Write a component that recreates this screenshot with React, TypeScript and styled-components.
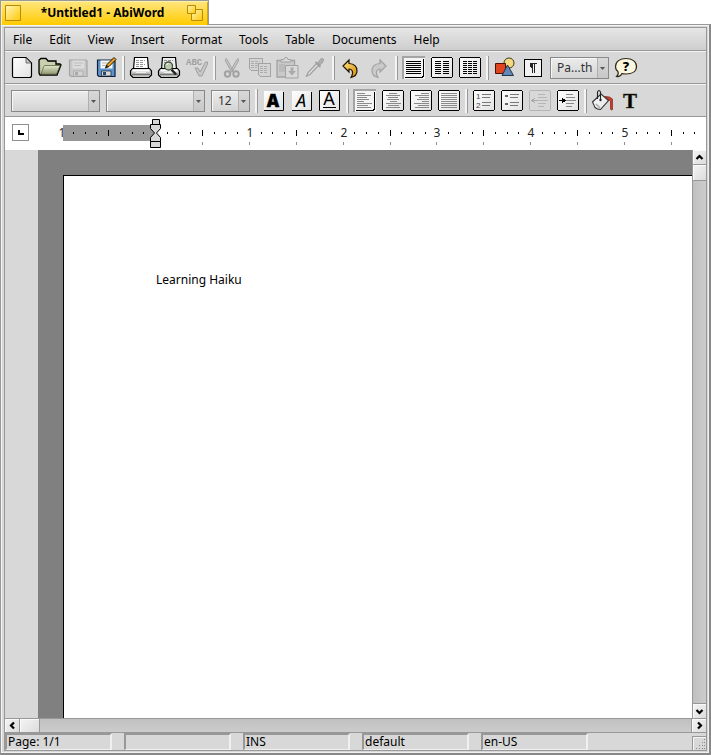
import React from "react";
import styled, { createGlobalStyle, css } from "styled-components";

const line = "#989898";
const face = "#d8d8d8";

const GlobalStyle = createGlobalStyle`
  *, *::before, *::after { box-sizing: border-box; }
  html, body { margin: 0; height: 100%; background: #fff; }
  #root { height: 100%; }
  body, button, select { font-family: "Noto Sans", "Open Sans", sans-serif; font-size: 12px; color: #000; }
  button { border: 0; padding: 0; margin: 0; background: none; }
`;

const Window = styled.div`
  display: flex;
  flex-direction: column;
  height: 100vh;
  min-height: 300px;
`;

const TitleTab = styled.header`
  display: flex;
  align-items: center;
  justify-content: space-between;
  align-self: flex-start;
  width: 209px;
  height: 25px;
  flex: none;
  padding: 0 5px 0 4px;
  margin-bottom: -1px;
  position: relative;
  border: 1px solid ${line};
  border-bottom: 0;
  background: linear-gradient(#ffe680, #ffcb00);
  box-shadow: inset 1px 1px #fff0a8, inset -1px 0 #d8a800;
`;

const Title = styled.h1`
  flex: 1;
  margin: 0;
  padding-right: 3px;
  text-align: center;
  font-size: 12px;
  line-height: 24px;
  font-weight: 700;
`;

const TitleButton = styled.button`
  display: flex;
`;

const Frame = styled.div`
  display: flex;
  flex-direction: column;
  flex: 1;
  min-height: 0;
  padding: 2px;
  border: 1px solid ${line};
  border-right: 2px solid #888;
  border-bottom: 2px solid #888;
  background: ${face};
  box-shadow: inset 1px 1px #f4f4f4, inset -1px -1px #f0f0f0;
`;

const Content = styled.div`
  display: flex;
  flex-direction: column;
  flex: 1;
  min-height: 0;
  border: 1px solid ${line};
  margin: 0 0 0 1px;
  background: ${face};
`;

const MenuBar = styled.nav`
  display: flex;
  flex: none;
  height: 23px;
  border-bottom: 1px solid ${line};
  background: linear-gradient(#e6e6e6, #cecece);
`;

const MenuItem = styled.button`
  padding: 1px 9px 0 8px;
  line-height: 22px;
`;

const Toolbar = styled.div`
  display: flex;
  align-items: center;
  flex: none;
  height: 33px;
  padding: 0 3px;
  border-top: 1px solid #f4f4f4;
  border-bottom: 1px solid ${line};
  background: ${face};
`;

const ToolButton = styled.button`
  display: flex;
  align-items: center;
  justify-content: center;
  flex: none;
  width: 28px;
  height: 28px;
  svg { display: block; overflow: visible; }
`;

const Separator = styled.span`
  flex: none;
  width: 3px;
  height: 24px;
  margin: 0 2px;
  background: linear-gradient(90deg, #f4f4f4 2px, #989898 2px);
`;

const Combo = styled.span<{ $width: number }>`
  display: flex;
  position: relative;
  flex: none;
  width: ${(p) => p.$width}px;
  height: 22px;
  margin: 0 3px;
  border: 1px solid #888;
  box-shadow: inset 1px 1px #f8f8f8;
  background: linear-gradient(#ececec, #d4d4d4);
  &::after {
    content: "";
    position: absolute;
    inset: 0 0 0 auto;
    width: 11px;
    pointer-events: none;
    border-left: 1px solid #b0b0b0;
    background: linear-gradient(#d8d8d8, #c8c8c8);
  }
`;

const ComboSelect = styled.select`
  appearance: none;
  flex: 1;
  min-width: 0;
  padding: 0 12px 0 6px;
  border: 0;
  border-radius: 0;
  outline: 0;
  background: none;
  color: #333;
  line-height: 20px;
`;

const ComboArrow = styled.svg`
  position: absolute;
  right: 3px;
  top: 9px;
  z-index: 1;
  pointer-events: none;
`;

const Ruler = styled.div`
  display: flex;
  flex: none;
  align-items: center;
  height: 33px;
  background: #fff;
`;

const TabSelector = styled.button`
  display: flex;
  align-items: center;
  justify-content: center;
  flex: none;
  width: 17px;
  height: 17px;
  margin: 0 0 2px 7px;
  border: 1px solid #909090;
  background: #fff;
`;

const RulerScale = styled.svg`
  display: block;
  flex: 1;
  min-width: 0;
  height: 33px;
  margin-left: 24px;
  overflow: hidden;
  font-family: "Noto Sans", sans-serif;
  font-size: 12px;
`;

const Workspace = styled.div`
  display: flex;
  flex: 1;
  min-height: 0;
`;

const LeftRuler = styled.div`
  flex: none;
  width: 33px;
  background: ${face};
`;

const Viewport = styled.main`
  flex: 1;
  min-width: 0;
  overflow: hidden;
  padding: 25px 0 0 25px;
  background: #808080;
`;

const Page = styled.article`
  height: 100%;
  padding: 95px 92px;
  border-top: 1px solid #000;
  border-left: 1px solid #000;
  background: #fff;
`;

const Paragraph = styled.p`
  margin: 0;
  font-size: 12px;
  line-height: 17px;
`;

const ScrollBar = styled.div<{ $vertical?: boolean }>`
  display: flex;
  flex: ${(p) => (p.$vertical ? "none" : "0 0 15px")};
  flex-direction: ${(p) => (p.$vertical ? "column" : "row")};
  ${(p) =>
    p.$vertical
      ? css`
          width: 14px;
          border-left: 1px solid ${line};
          background: linear-gradient(90deg, #c0c0c0, #cccccc);
        `
      : css`
          border-top: 1px solid ${line};
          border-bottom: 1px solid ${line};
          background: linear-gradient(#c0c0c0, #cccccc);
        `}
`;

const raised = css`
  background: linear-gradient(135deg, #f4f4f4, #dcdcdc);
  box-shadow: inset 1px 1px #fafafa;
`;

const ScrollButton = styled.button<{ $vertical?: boolean }>`
  display: flex;
  align-items: center;
  justify-content: center;
  flex: none;
  width: ${(p) => (p.$vertical ? 13 : 14)}px;
  height: ${(p) => (p.$vertical ? 14 : 13)}px;
  ${raised}
`;

const ScrollThumb = styled.div<{ $vertical?: boolean }>`
  flex: none;
  width: ${(p) => (p.$vertical ? 13 : 21)}px;
  height: ${(p) => (p.$vertical ? 17 : 13)}px;
  border: 0 solid ${line};
  border-width: ${(p) => (p.$vertical ? "1px 0" : "0 1px")};
  ${raised}
`;

const ScrollSpace = styled.div<{ $vertical?: boolean }>`
  flex: 1;
  ${(p) => (p.$vertical ? "border-bottom" : "border-right")}: 1px solid ${line};
`;

const StatusBar = styled.footer`
  display: flex;
  flex: none;
  gap: 12px;
  height: 17px;
  background: ${face};
`;

const StatusPanel = styled.div`
  flex: 0 1 107px;
  min-width: 0;
  height: 17px;
  padding-left: 1px;
  border: 2px solid;
  border-color: ${line} #f0f0f0 #f0f0f0 ${line};
  border-width: 2px 2px 1px 2px;
  line-height: 14px;
  white-space: nowrap;
`;

const ResizeGrip = styled.div`
  display: flex;
  align-items: flex-end;
  justify-content: flex-end;
  flex: none;
  width: 14px;
  height: 14px;
  margin: 3px 0 0 auto;
  border-top: 1px solid ${line};
  border-left: 1px solid ${line};
  box-shadow: inset 1px 1px #f4f4f4;
`;

const Ic = ({ children, crisp }: { children: React.ReactNode; crisp?: boolean }) => (
  <svg width="24" height="24" viewBox="0 0 24 24" fill="none" shapeRendering={crisp ? "crispEdges" : undefined} aria-hidden="true">
    <defs>
      <linearGradient id="paper" x1="0" y1="0" x2="1" y2="1">
        <stop offset="0" stopColor="#fff" />
        <stop offset="1" stopColor="#e2e2e2" />
      </linearGradient>
      <linearGradient id="olive" x1="0" y1="0" x2="0" y2="1">
        <stop offset="0" stopColor="#e3e8cb" />
        <stop offset="1" stopColor="#8c9670" />
      </linearGradient>
      <linearGradient id="gold" x1="0" y1="0" x2="1" y2="1">
        <stop offset="0" stopColor="#ffe68a" />
        <stop offset="1" stopColor="#d78b00" />
      </linearGradient>
    </defs>
    {children}
  </svg>
);

const NewIcon = () => (
  <Ic>
    <path d="M4 1.500H16L21.500 7V19.500Q21.500 21.500 19.500 21.500H4Q2.500 21.500 2.500 20V3Q2.500 1.500 4 1.500Z" fill="url(#paper)" stroke="#000" strokeWidth="1.200" />
    <path d="M16 2V7H21Z" fill="#c8c8c8" stroke="#555" strokeWidth=".8" />
  </Ic>
);

const OpenIcon = () => (
  <Ic>
    <path d="M1 17V4L3 2.500H8L10 5H18V8H22L23 9L19 19H2Z" fill="#aab28b" stroke="#000" strokeWidth="1.300" />
    <path d="M2 4.500L3.500 3.500H7.500L9.500 6H17V9H7L3 17Z" fill="#cbd1af" />
    <path d="M6.500 9.500H22L18.500 18.300H3L5.500 11Z" fill="url(#olive)" stroke="#505a38" strokeWidth=".7" />
  </Ic>
);

const Floppy = ({ off }: { off?: boolean }) => {
  const edge = off ? "#a4a4a4" : "#102038";
  return (
    <g>
      <path d="M3.500 4H20L21 5V20.500H5L3.500 19Z" fill={off ? "#c8c8c8" : "#5d92ca"} stroke={edge} strokeWidth="1.200" />
      <path d="M6.500 4.500H18.500V12.500H6.500Z" fill={off ? "#dcdcdc" : "#f8f8f8"} />
      <path d="M8 7H17M8 9.500H15" stroke={off ? "#bdbdbd" : "#b6b6b6"} />
      <path d="M7.500 15H17V20H7.500Z" fill={off ? "#d4d4d4" : "#d8d8d8"} stroke={edge} strokeWidth=".7" />
      <path d="M9 16H12V19H9Z" fill={off ? "#aaa" : "#28456b"} />
    </g>
  );
};

const SaveAsIcon = () => (
  <Ic>
    <Floppy />
    <path d="M11.500 12L13 8.500L20 1.500L22 3.500L15 10.500Z" fill="#f0a11d" stroke="#211400" strokeWidth="1" />
    <path d="M11 12.500L13 9L14.500 10.500Z" fill="#222" />
  </Ic>
);

const PrintIcon = ({ preview }: { preview?: boolean }) => (
  <Ic>
    <path d="M4.500 13L5.500 1.500H18.500L19.500 13" fill={preview ? "#ececec" : "#fff"} stroke="#000" strokeWidth="1.200" />
    <path d="M7 4.500H16M7 6.500H14M7 8.500H16M7 10.500H14" stroke="#888" strokeDasharray="3 1" strokeWidth=".9" />
    <path d="M3.500 12.500H20.500L22.500 15V19L20 21.500H4L1.500 19V15Z" fill="#c4c7c2" stroke="#000" strokeWidth="1.200" />
    <path d="M3.500 14.500H20.500" stroke="#fff" strokeWidth="2" />
    <path d="M3 18.500H21" stroke="#777" strokeWidth="1.500" />
    <path d="M7 16.500H17" stroke="#eee" />
    {preview && (
      <g>
        <path d="M14.500 13.500L19 18.500" stroke="#222" strokeWidth="2.500" />
        <circle cx="11.500" cy="10" r="4" fill="#bccab0" stroke="#465040" strokeWidth="1.300" />
        <path d="M9.500 9Q10 7.500 11.500 7.500" stroke="#fff" />
      </g>
    )}
  </Ic>
);

const SpellIcon = () => (
  <Ic>
    <text x="1" y="9" fontFamily="Liberation Mono, monospace" fontWeight="700" fontSize="9" fill="#a0a0a0">ABC</text>
    <path d="M10 12L13 12L15 16L20.500 6H22.500V8L17 20H14Z" fill="#c6c6c6" stroke="#a0a0a0" strokeWidth="1" />
  </Ic>
);

const CutIcon = () => (
  <Ic>
    <path d="M6 2.500L8 5L13 15L11.500 16L5.500 5ZM18 2.500L16 5L10.500 15L12 16L18.500 5Z" fill="#c8c8c8" stroke="#a2a2a2" />
    <circle cx="7.500" cy="18" r="2.700" stroke="#a2a2a2" strokeWidth="2" />
    <circle cx="16" cy="18" r="2.700" stroke="#a2a2a2" strokeWidth="2" />
  </Ic>
);

const CopyIcon = () => (
  <Ic crisp>
    <path d="M1 2H14V14H3L1 12Z" fill="#d4d4d4" stroke="#a4a4a4" />
    <path d="M3 5H12M3 7H11M3 9H12M3 11H9" stroke="#adadad" strokeDasharray="3 1" />
    <path d="M10 7H22V20H12L10 18Z" fill="#d4d4d4" stroke="#a4a4a4" />
    <path d="M12 10H20M12 12H20M12 14H20M12 16H19" stroke="#adadad" strokeDasharray="3 1" />
  </Ic>
);

const PasteIcon = () => (
  <Ic>
    <path d="M1 4.500H18.500V21H1Z" fill="#c9c9c9" stroke="#a2a2a2" strokeWidth="1.300" />
    <path d="M5 6V3.500H8L9 1.500H11L12 3.500H15V6Z" fill="#d8d8d8" stroke="#a2a2a2" />
    <path d="M3 9H9M3 11H9M3 13H9M3 15H9" stroke="#adadad" />
    <path d="M9.500 9.500H22V22H9.500Z" fill="#d8d8d8" stroke="#a2a2a2" />
    <path d="M14.500 11.500H17.500V15H20L16 19.500L12 15H14.500Z" fill="#ababab" />
  </Ic>
);

const DropperIcon = () => (
  <Ic>
    <path d="M2.500 20L4 16.500L13 7L15 9L6 18.500Z" fill="#ddd" stroke="#a0a0a0" strokeWidth="1.200" />
    <path d="M11.500 6L16.500 11" stroke="#a0a0a0" strokeWidth="2" />
    <path d="M14 7L17 2.500L19.500 3L19 6L16 9Z" fill="#b0b0b0" stroke="#a0a0a0" />
  </Ic>
);

const ArrowIcon = ({ redo }: { redo?: boolean }) => (
  <Ic>
    <g transform={redo ? "translate(23 0) scale(-1 1)" : undefined}>
      <path
        d="M4 10L10 4V7.500Q18 8 18 15Q18 20 12 21.500Q14.500 17 13 14.500Q12 13 10 13V16Z"
        fill={redo ? "#cacaca" : "url(#gold)"}
        stroke={redo ? "#a2a2a2" : "#201500"}
        strokeWidth="1.200"
      />
    </g>
  </Ic>
);

const Box = ({ off, pressed, children }: { off?: boolean; pressed?: boolean; children: React.ReactNode }) => (
  <Ic crisp>
    {pressed ? (
      <g>
        <path d="M0 0H23V23H0Z" fill="#a4a4a4" />
        <path d="M2 2H23V23H2Z" fill="#f4f4f4" />
        <path d="M21 3V20H20V21H3V22H21V21H22V3Z" fill="#000" />
      </g>
    ) : (
      <path d="M2.500 1.500H21.500L22.500 2.500V20.500L21.500 21.500H2.500L1.500 20.500V2.500Z" fill={off ? "#d8d8d8" : "url(#paper)"} stroke={off ? "#b4b4b4" : "#000"} />
    )}
    {children}
  </Ic>
);

const rows = [5, 7, 9, 11, 13, 15, 17];

const ColumnsIcon = ({ count }: { count: 1 | 2 | 3 }) => {
  const spans = { 1: [[4, 19]], 2: [[5, 11], [13, 19]], 3: [[5, 9], [10, 14], [15, 19]] }[count];
  return (
    <Box pressed={count === 1}>
      {rows.map((y) => spans.map(([a, b]) => <path key={`${y}-${a}`} d={`M${a} ${y + 0.5}H${b}`} stroke="#000" />))}
    </Box>
  );
};

const AlignIcon = ({ kind }: { kind: "left" | "center" | "right" | "justify" }) => (
  <Box pressed={kind === "left"}>
    {[4, 6, 8, 10, 12, 14, 16, 18].map((y, i) => {
      const w = kind === "justify" ? 16 : [8, 14, 10, 12, 7, 15, 11, 14][i];
      const x = kind === "right" ? 20 - w : kind === "center" ? 12 - Math.floor(w / 2) : 4;
      return <path key={y} d={`M${x} ${y + 0.5}h${w}`} stroke="#8a8a8a" />;
    })}
  </Box>
);

const LetterIcon = ({ kind }: { kind: "bold" | "italic" | "underline" }) => (
  <Ic>
    <path d="M2 2H21V21H2Z" fill="url(#paper)" />
    {kind === "underline" ? <path d="M1.500 1.500H21.500V21.500H1.500Z" stroke="#000" /> : <path d="M2 21.500H21.500V3" stroke="#000" />}
    <text
      x="11"
      y={kind === "underline" ? 16 : 18}
      textAnchor="middle"
      fontFamily="Noto Sans, sans-serif"
      fontWeight={kind === "bold" ? 900 : 400}
      fontStyle={kind === "italic" ? "italic" : "normal"}
      fontSize={kind === "bold" ? 17 : 18}
      fill="#000"
      stroke={kind === "bold" ? "#000" : "none"}
      strokeWidth=".5"
    >A</text>
    {kind === "underline" && <path d="M5 18.500H18" stroke="#000" />}
  </Ic>
);

const ListIcon = ({ numbered }: { numbered?: boolean }) => (
  <Box>
    {numbered ? (
      <g fontFamily="Liberation Sans, sans-serif" fontSize="8" fill="#444">
        <text x="4" y="10">1</text>
        <text x="4" y="19">2</text>
      </g>
    ) : (
      <path d="M5 6H8V8H5ZM5 14H8V16H5Z" fill="#666" />
    )}
    <path d="M10 5.500H19M10 8.500H18M10 13.500H19M10 16.500H18" stroke="#777" />
  </Box>
);

const IndentIcon = ({ out }: { out?: boolean }) => (
  <Box off={out}>
    <path d="M10 5.500H17M10 8.500H19M10 11.500H20M10 14.500H18M10 17.500H16" stroke={out ? "#b6b6b6" : "#888"} />
    {out ? <path d="M10 11.500H4M7 9L4 11.500L7 14" stroke="#aaa" /> : <path d="M3 11.500H9M6 9V14L9 11.500Z" stroke="#000" fill="#000" />}
  </Box>
);

const ShapesIcon = () => (
  <Ic>
    <circle cx="16" cy="7" r="5" fill="#f3da80" stroke="#403818" />
    <path d="M2.500 7.500H12.500V17.500H2.500Z" fill="#df4520" stroke="#501000" />
    <path d="M14.500 9L20.500 19.500H9Z" fill="#6487b5" stroke="#20344f" />
  </Ic>
);

const PilcrowIcon = () => (
  <Ic crisp>
    <path d="M3.500 3.500H20.500V20.500H3.500Z" fill="#f2f2f2" stroke="#000" />
    <path d="M9 7.500H16M11.500 7V17M13.500 7V17" stroke="#222" />
    <path d="M9 8H11V12H10L9 11Z" fill="#222" />
  </Ic>
);

const HelpIcon = () => (
  <Ic>
    <path d="M12 2.500C18 2.500 22.500 5.500 22.500 10.500C22.500 15.500 18 18 12 18C10 18 9 18 8 17.500C7 20 4 21 2.500 20.500Q5 18.500 4 15.500Q1.500 14 1.500 10.500C1.500 5.500 6 2.500 12 2.500Z" fill="#fbf7df" stroke="#302c1c" strokeWidth="1.200" />
    <text x="12" y="15" textAnchor="middle" fontFamily="Noto Sans, sans-serif" fontWeight="800" fontSize="13" fill="#000">?</text>
  </Ic>
);

const BucketIcon = () => (
  <Ic>
    <path d="M13.500 7.500Q19 7 21.500 10V20.500Q20.500 22 19.500 20V12L18 11Z" fill="#c93c2a" stroke="#8a2418" strokeWidth=".7" />
    <path d="M1.500 13L10 5L17.500 11.500L9.500 20.500Q6 20.500 4 18.500Z" fill="url(#paper)" stroke="#333" strokeWidth="1.100" />
    <path d="M6.500 10V3Q8 0 9.500 3V10" stroke="#222" strokeWidth="1.100" />
    <path d="M5 15L9 19" stroke="#aaa" strokeWidth="1.500" />
    <circle cx="9.500" cy="11" r="1.200" fill="#222" />
  </Ic>
);

const TextColorIcon = () => (
  <Ic>
    <text x="11" y="19" textAnchor="middle" fontFamily="Liberation Serif, serif" fontWeight="700" fontSize="21" fill="#000" stroke="#3c3520" strokeWidth=".4">T</text>
  </Ic>
);

const Chevron = ({ turn }: { turn: number }) => (
  <svg width="9" height="9" viewBox="0 0 9 9" aria-hidden="true">
    <path d="M1.500 6L4.500 3L7.500 6" fill="none" stroke="#000" strokeWidth="2.200" transform={`rotate(${turn} 4.500 4.500)`} />
  </svg>
);

const Field = ({ label, width, value }: { label: string; width: number; value: string }) => (
  <Combo $width={width}>
    <ComboSelect aria-label={label} defaultValue={value}>
      <option>{value}</option>
    </ComboSelect>
    <ComboArrow width="5" height="3" viewBox="0 0 5 3" aria-hidden="true">
      <path d="M0 0H5L2.500 3Z" fill="#555" />
    </ComboArrow>
  </Combo>
);

type Tool = [string, React.ReactNode];

const ToolGroup = ({ tools }: { tools: Tool[] }) => (
  <>
    {tools.map(([label, icon]) => (
      <ToolButton key={label} type="button" aria-label={label}>{icon}</ToolButton>
    ))}
  </>
);

const standardGroups: Tool[][] = [
  [["New", <NewIcon />], ["Open", <OpenIcon />], ["Save", <Ic><Floppy off /></Ic>], ["Save as", <SaveAsIcon />]],
  [["Print", <PrintIcon />], ["Print preview", <PrintIcon preview />], ["Spelling", <SpellIcon />]],
  [["Cut", <CutIcon />], ["Copy", <CopyIcon />], ["Paste", <PasteIcon />], ["Format painter", <DropperIcon />]],
  [["Undo", <ArrowIcon />], ["Redo", <ArrowIcon redo />]],
  [["One column", <ColumnsIcon count={1} />], ["Two columns", <ColumnsIcon count={2} />], ["Three columns", <ColumnsIcon count={3} />]],
  [["Insert image", <ShapesIcon />], ["Show formatting marks", <PilcrowIcon />]],
];

const formatGroups: Tool[][] = [
  [["Bold", <LetterIcon kind="bold" />], ["Italic", <LetterIcon kind="italic" />], ["Underline", <LetterIcon kind="underline" />]],
  [["Align left", <AlignIcon kind="left" />], ["Align center", <AlignIcon kind="center" />], ["Align right", <AlignIcon kind="right" />], ["Justify", <AlignIcon kind="justify" />]],
  [["Numbered list", <ListIcon numbered />], ["Bulleted list", <ListIcon />], ["Decrease indent", <IndentIcon out />], ["Increase indent", <IndentIcon />]],
  [["Highlight", <BucketIcon />], ["Text color", <TextColorIcon />]],
];

const menus = ["File", "Edit", "View", "Insert", "Format", "Tools", "Table", "Documents", "Help"];

const inch = 93.8;
const origin = 92.5;

const RulerDrawing = () => {
  const scale = React.useRef<SVGSVGElement>(null);
  const [width, setWidth] = React.useState(0);

  React.useLayoutEffect(() => {
    const el = scale.current;
    if (!el) return;
    const measure = () => setWidth(el.getBoundingClientRect().width);
    measure();
    const observer = new ResizeObserver(measure);
    observer.observe(el);
    return () => observer.disconnect();
  }, []);

  const place = (n: number) => Math.floor(origin + 10 + (n * inch) / 8);
  const count = Math.max(0, Math.floor(((width - origin - 11) * 8) / inch)) + 8;
  const marks = Array.from({ length: count }, (_, i) => i - 7).filter((n) => n !== 0);

  return (
    <RulerScale ref={scale} role="img" aria-label="Horizontal ruler">
      <text x="9" y="20" textAnchor="middle" fill="#333">1</text>
      <path d="M10 8H102V24H10Z" fill="#989898" />
      {marks.map((n) => {
        const x = place(n);
        if (n % 8 === 0) return <text key={n} x={x + 1} y="20" textAnchor="middle" fill="#222">{n / 8}</text>;
        return n % 4 === 0 ? <rect key={n} x={x} y="13" width="1" height="6" /> : <rect key={n} x={x} y="15" width="1" height="2" />;
      })}
      {marks.filter((n) => n > 0 && n % 4 === 0).map((n) => (
        <rect key={n} x={place(n)} y="25" width="1" height="3" fill="#909090" />
      ))}
      <g fill="#d8d8d8" stroke="#000">
        <path d="M99.500 2.500H106.500V7.500H99.500Z" />
        <path d="M97.500 7.500H107.500V11.500L103.500 16L107.500 20.500V24.500H97.500V20.500L101.500 16L97.500 11.500Z" />
        <path d="M97.500 24.500H107.500V30.500H97.500Z" />
      </g>
    </RulerScale>
  );
};

const Gold = ({ double }: { double?: boolean }) => (
  <svg width="16" height="16" viewBox="0 0 16 16" aria-hidden="true">
    <defs>
      <linearGradient id="tabgold" x1="0" y1="0" x2="1" y2="1">
        <stop offset="0" stopColor="#fff5bd" />
        <stop offset="1" stopColor="#ffc800" />
      </linearGradient>
    </defs>
    <g fill="url(#tabgold)" stroke="#b98b00">
      {double ? (
        <>
          <path d="M4.500 4.500H15.500V15.500H4.500Z" />
          <path d="M.5 .5H8.500V8.500H.5Z" />
        </>
      ) : (
        <path d="M.5 .5H15.500V15.500H.5Z" />
      )}
    </g>
  </svg>
);

export default function App() {
  return (
    <Window>
      <GlobalStyle />
      <TitleTab>
        <TitleButton type="button" aria-label="Close"><Gold /></TitleButton>
        <Title>*Untitled1 - AbiWord</Title>
        <TitleButton type="button" aria-label="Zoom"><Gold double /></TitleButton>
      </TitleTab>
      <Frame>
        <Content>
          <MenuBar aria-label="Main menu">
            {menus.map((m) => <MenuItem key={m} type="button">{m}</MenuItem>)}
          </MenuBar>
          <Toolbar role="toolbar" aria-label="Standard">
            {standardGroups.map((tools, i) => (
              <React.Fragment key={i}>
                {i > 0 && <Separator />}
                <ToolGroup tools={tools} />
              </React.Fragment>
            ))}
            <Field label="Zoom level" width={59} value="Pa...th" />
            <ToolGroup tools={[["Help", <HelpIcon />]]} />
          </Toolbar>
          <Toolbar role="toolbar" aria-label="Formatting">
            <Field label="Style" width={89} value="" />
            <Field label="Font" width={99} value="" />
            <Field label="Font size" width={39} value="12" />
            {formatGroups.map((tools, i) => (
              <React.Fragment key={i}>
                <Separator />
                <ToolGroup tools={tools} />
              </React.Fragment>
            ))}
          </Toolbar>
          <Ruler>
            <TabSelector type="button" aria-label="Tab type">
              <svg width="7" height="7" viewBox="0 0 7 7" aria-hidden="true"><path d="M1 1H3V4H7V6H1Z" fill="#000" /></svg>
            </TabSelector>
            <RulerDrawing />
          </Ruler>
          <Workspace>
            <LeftRuler />
            <Viewport>
              <Page>
                <Paragraph>Learning Haiku</Paragraph>
              </Page>
            </Viewport>
            <ScrollBar $vertical>
              <ScrollButton $vertical type="button" aria-label="Scroll up"><Chevron turn={0} /></ScrollButton>
              <ScrollThumb $vertical />
              <ScrollSpace $vertical />
              <ScrollButton $vertical type="button" aria-label="Scroll down"><Chevron turn={180} /></ScrollButton>
            </ScrollBar>
          </Workspace>
          <ScrollBar>
            <ScrollButton type="button" aria-label="Scroll left"><Chevron turn={270} /></ScrollButton>
            <ScrollThumb />
            <ScrollSpace />
            <ScrollButton type="button" aria-label="Scroll right"><Chevron turn={90} /></ScrollButton>
          </ScrollBar>
          <StatusBar>
            <StatusPanel>Page: 1/1</StatusPanel>
            <StatusPanel />
            <StatusPanel>INS</StatusPanel>
            <StatusPanel>default</StatusPanel>
            <StatusPanel>en-US</StatusPanel>
            <ResizeGrip>
              <svg width="11" height="11" viewBox="0 0 11 11" aria-hidden="true">
                <path d="M9 0h1v1h-1zM7 3h1v1h-1zM9 3h1v1h-1zM4 6h1v1h-1zM7 6h1v1h-1zM9 6h1v1h-1zM1 9h1v1h-1zM4 9h1v1h-1zM7 9h1v1h-1zM9 9h1v1h-1z" fill="#888" />
              </svg>
            </ResizeGrip>
          </StatusBar>
        </Content>
      </Frame>
    </Window>
  );
}
